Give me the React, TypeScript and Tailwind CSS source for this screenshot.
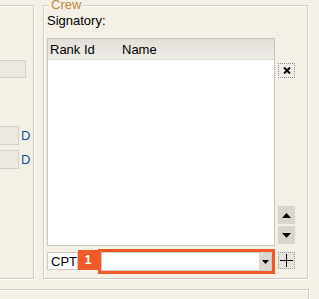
function TriUp() {
  return (
    <svg width="9" height="5" viewBox="0 0 9 5">
      <path d="M4.5 0 L9 5 L0 5 Z" fill="#000" />
    </svg>
  )
}

function TriDown({ w = 9, h = 5 }: { w?: number; h?: number }) {
  return (
    <svg width={w} height={h} viewBox={`0 0 ${w} ${h}`}>
      <path d={`M0 0 L${w} 0 L${w / 2} ${h} Z`} fill="#000" />
    </svg>
  )
}

export default function App() {
  const etched = 'border-[#d0ccc2] shadow-[inset_1px_1px_0_#fff,1px_1px_0_#fff]'
  return (
    <div className="h-[299px] w-[319px] overflow-hidden bg-[#f4f0e6] font-['Liberation_Sans',Arial,sans-serif] text-[13px] leading-[15px] text-black">
      <div className="flex pt-[5px]">
        {/* left panel, cut off at the screen edge */}
        <div className={`-ml-[66px] h-[274px] w-[100px] shrink-0 border-y border-r ${etched}`}>
          <div className="ml-[64px] flex flex-col">
            <div className="mt-[54px] h-[18px] w-[28px] border border-[#d2cfc6] bg-[#ece9e0]" />
            <div className="mt-[48px] flex items-center gap-[2px]">
              <div className="h-[19px] w-[21px] border border-[#d2cfc6] bg-[#ece9e0]" />
              <span className="text-[#17569c]">D</span>
            </div>
            <div className="mt-[5px] flex items-center gap-[2px]">
              <div className="h-[19px] w-[21px] border border-[#d2cfc6] bg-[#ece9e0]" />
              <span className="text-[#17569c]">D</span>
            </div>
          </div>
        </div>

        {/* Crew fieldset */}
        <div className={`ml-[9px] h-[274px] w-[265px] shrink-0 border ${etched} pl-[3px]`}>
          <div className="-mt-[9px] ml-[2px] w-fit bg-[#f4f0e6] px-[2px] text-[#b98a3e]">Crew</div>
          <div className="mt-[1px]">Signatory:</div>
          <div className="mt-[10px] flex">
            <div className="flex h-[208px] w-[228px] flex-col border border-[#c9c6bd] bg-white">
              <div className="flex h-[21px] items-center border-b border-[#dcd9d2] bg-gradient-to-b from-[#e2dfd8] to-[#eeece7] pl-[2px]">
                <span className="w-[72px]">Rank Id</span>
                <span>Name</span>
              </div>
            </div>
            <div className="ml-[3px] flex h-[208px] w-[17px] flex-col">
              <button className="mt-[25px] flex h-[15px] w-[17px] items-center justify-center border border-dotted border-[#8e8e8e] bg-[#efeee9]">
                <svg width="8" height="7" viewBox="0 0 8 7">
                  <path d="M1 0.5 L7 6.5 M7 0.5 L1 6.5" stroke="#000" strokeWidth="2" />
                </svg>
              </button>
              <button className="mt-auto flex h-[18px] w-[17px] items-center justify-center bg-[#d9d6cd]">
                <TriUp />
              </button>
              <button className="mb-[2px] mt-[2px] flex h-[18px] w-[17px] items-center justify-center bg-[#d9d6cd]">
                <TriDown />
              </button>
            </div>
          </div>

          <div className="mt-[3px] flex items-start">
            <div className="mt-[3px] h-[18px] w-[31px] border border-[#cfccc4] bg-white pl-[3px] pt-px">CPT</div>
            <div className="mt-[1px] flex h-[20px] w-[20px] items-center justify-center bg-[#f05a28] text-[12px] font-bold text-white">1</div>
            <div className="h-[25px] w-[177px] border-[3px] border-[#f15a24]">
              <div className="flex h-full w-full justify-end border border-[#cfccc4] bg-white">
                <div className="flex h-full w-[12px] items-center justify-center bg-[#dad7ce]">
                  <TriDown w={7} h={4} />
                </div>
              </div>
            </div>
            <button className="ml-[3px] mt-[3px] flex h-[17px] w-[17px] items-center justify-center border border-dotted border-[#9a9a9a] bg-[#e6e4dd]">
              <svg width="13" height="13" viewBox="0 0 13 13">
                <path d="M6.5 0 V13 M0 6.5 H13" stroke="#000" strokeWidth="1" />
              </svg>
            </button>
          </div>
        </div>
      </div>

      {/* lower panel */}
      <div className={`-ml-[10px] mt-[10px] h-[40px] w-[319px] border-t border-r ${etched}`} />
    </div>
  )
}
